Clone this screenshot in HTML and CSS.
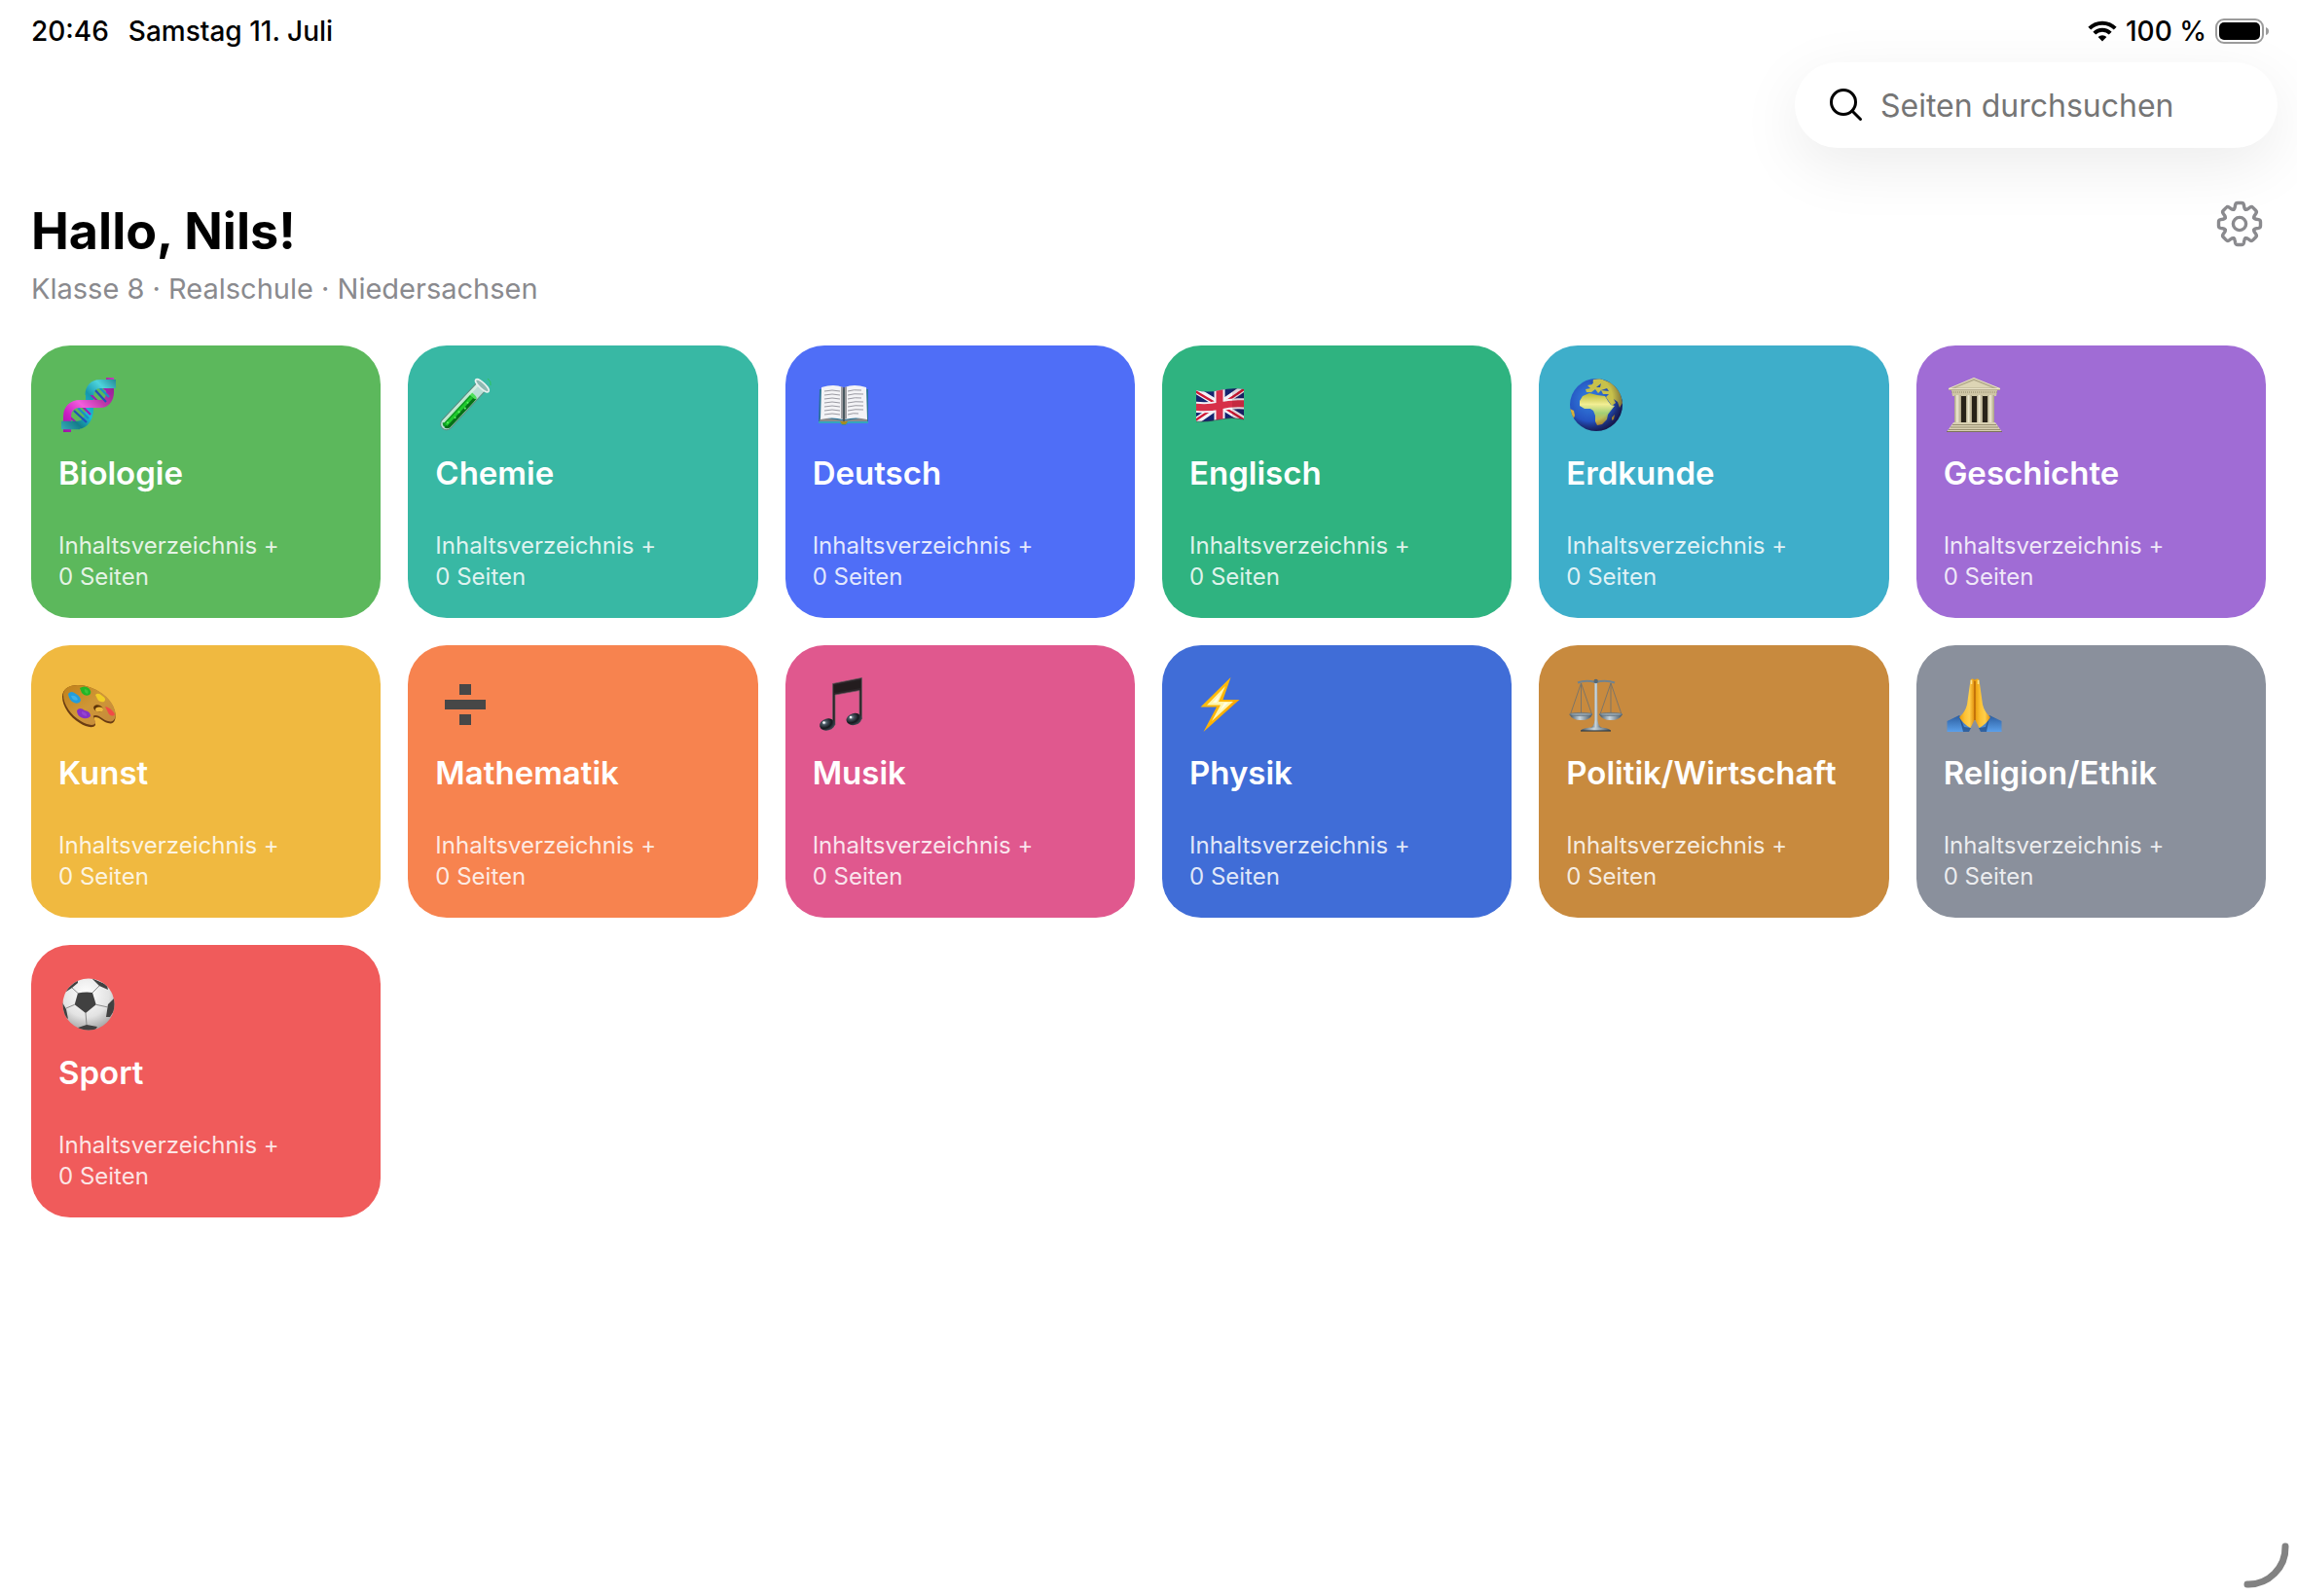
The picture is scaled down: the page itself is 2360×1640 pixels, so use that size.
FILE: index.html
```html
<!DOCTYPE html>
<html lang="de">
<head>
<meta charset="utf-8">
<meta name="viewport" content="width=device-width, initial-scale=1">
<title>Fächer</title>
<link rel="stylesheet" href="styles.css">
</head>
<body>
<div class="status">
  <div class="status-group status-left"><time>20:46</time><span>Samstag 11. Juli</span></div>
  <div class="status-group">
    <svg class="wifi" viewBox="0 0 30 22" aria-hidden="true"><g fill="none" stroke="#000" stroke-width="4"><path d="M1.8 8.2A18.5 18.5 0 0 1 28.2 8.2"/><path d="M6.8 13.2A11.5 11.5 0 0 1 23.2 13.2"/></g><path d="M15 21.5L10.6 17.1A6.3 6.3 0 0 1 19.4 17.1Z"/></svg>
    <span>100 %</span>
    <svg class="battery" viewBox="0 0 56 26" aria-hidden="true"><rect x="1" y="1" width="48" height="24" rx="8" fill="none" stroke="#9b9b9b" stroke-width="2"/><rect x="4" y="4" width="42" height="18" rx="5"/><path d="M52 9Q55 10 55 13T52 17Z" fill="#9b9b9b"/></svg>
  </div>
</div>

<form class="search" role="search">
  <svg class="search-icon" viewBox="0 0 34 34" aria-hidden="true"><circle cx="14" cy="14" r="12.5"/><path d="M23 23L31.5 31.5"/></svg>
  <input type="search" aria-label="Seiten durchsuchen" placeholder="Seiten durchsuchen">
</form>

<main>
  <header class="intro">
    <div>
      <h1>Hallo, Nils!</h1>
      <p>Klasse 8 · Realschule · Niedersachsen</p>
    </div>
    <button class="settings" type="button" aria-label="Einstellungen">
      <svg viewBox="-24 -24 48 48" aria-hidden="true">
        <defs><path id="tooth" d="M-6.1-14.8Q-5-15.5-4.8-17L-4.4-19.5Q-4-21.5-2-21.5H2Q4-21.5 4.4-19.5L4.8-17Q5-15.5 6.1-14.8"/></defs>
        <g fill="none" stroke="#8a8a8e" stroke-width="3.4" stroke-linecap="round">
          <use href="#tooth"/><use href="#tooth" transform="rotate(45)"/><use href="#tooth" transform="rotate(90)"/><use href="#tooth" transform="rotate(135)"/><use href="#tooth" transform="rotate(180)"/><use href="#tooth" transform="rotate(225)"/><use href="#tooth" transform="rotate(270)"/><use href="#tooth" transform="rotate(315)"/>
          <circle r="6.6"/>
        </g>
      </svg>
    </button>
  </header>

  <nav class="grid" aria-label="Fächer">
    <a class="card biologie" href="#biologie">
      <svg class="icon" viewBox="0 0 60 60" aria-hidden="true">
        <defs>
          <linearGradient id="teal" x1="0" y1="60" x2="60" y2="0" gradientUnits="userSpaceOnUse"><stop offset="0" stop-color="#46bcc6"/><stop offset=".25" stop-color="#147d8b"/><stop offset=".42" stop-color="#1cbdd6"/><stop offset=".6" stop-color="#1597ae"/><stop offset=".78" stop-color="#4ed3dc"/><stop offset="1" stop-color="#1b7887"/></linearGradient>
          <linearGradient id="pink" x1="0" y1="60" x2="60" y2="0" gradientUnits="userSpaceOnUse"><stop offset="0" stop-color="#8d1496"/><stop offset=".25" stop-color="#c91cc4"/><stop offset=".45" stop-color="#f35ddd"/><stop offset=".65" stop-color="#bd38a8"/><stop offset=".85" stop-color="#9a2396"/><stop offset="1" stop-color="#d94fc6"/></linearGradient>
        </defs>
        <path d="M53 2V17C53 24 49 29 43 29" fill="none" stroke="url(#pink)" stroke-width="8"/>
        <path d="M32 16V34C32 43 28 50 20 51" fill="none" stroke="url(#teal)" stroke-width="8"/>
        <g stroke="#2450b8" stroke-width="2.2"><path d="M16 36L29 48M36 13L49 27"/><path stroke="#1a8fc8" d="M20 33L31 44M42 12L52 22"/><path stroke="#a01cb4" d="M10 41L18 48M25 32L33 40M31 17L41 27M45 11L54 19"/></g>
        <path d="M44 29H22C14 29 9 34 9 42V58" fill="none" stroke="url(#pink)" stroke-width="8"/>
        <path d="M59 8.500H43C36 8.500 32 13 32 20" fill="none" stroke="url(#teal)" stroke-width="9"/>
        <path d="M22 51H3" fill="none" stroke="url(#teal)" stroke-width="8.500"/>
      </svg>
      <h2>Biologie</h2>
      <p>Inhaltsverzeichnis +<br>0 Seiten</p>
    </a>
    <a class="card chemie" href="#chemie">
      <svg class="icon" viewBox="0 0 60 60" aria-hidden="true">
        <g transform="rotate(43 30 30)">
          <path d="M24 3V57A6 6 0 0 0 36 57V3Z" fill="#b9dfd6" stroke="#5e8d82" stroke-width="1"/>
          <path d="M25.500 17H35V57A5 5 0 0 1 25.500 57Z" fill="#0c9a22"/>
          <path d="M31 17H35V57A5 5 0 0 1 31 61Z" fill="#066f18"/>
          <path d="M29 19H32V58H29Z" fill="#1fc92c"/>
          <ellipse cx="30" cy="17" rx="4.800" ry="1.800" fill="#4ee15a"/>
          <path d="M26.200 5V57" stroke="#d7f4e5" stroke-width="2.600" stroke-linecap="round" opacity=".85"/>
          <g fill="#58ef5e"><circle cx="31" cy="26" r="1"/><circle cx="33" cy="32" r="1.100"/><circle cx="31" cy="39" r="1.200"/><circle cx="32" cy="46" r="1"/><circle cx="30" cy="55" r="1"/></g>
          <ellipse cx="30" cy="3" rx="9" ry="3" fill="#8fb9b2" stroke="#e7f2f0" stroke-width="1.600"/>
        </g>
        <path d="M54 3Q58 6 57 10" fill="none" stroke="#2bc45a" stroke-width="1"/>
      </svg>
      <h2>Chemie</h2>
      <p>Inhaltsverzeichnis +<br>0 Seiten</p>
    </a>
    <a class="card deutsch" href="#deutsch">
      <svg class="icon" viewBox="0 0 60 60" aria-hidden="true">
        <path d="M7 14H57V49H36Q34 51 32 51T28 49H6Z" fill="#2a7398"/>
        <path d="M6 47H28Q32 51 36 47H57V49H36Q32 52 28 49H6Z" fill="#34a5be"/>
        <path d="M8 43L31 46L32 48L33 46L56 43V47H36Q32 50 28 47H7Z" fill="#8b8a8a"/>
        <path d="M9 12Q22 8 31 12V45Q20 42 8 45Z" fill="#f3f3f6"/><path d="M55 12Q42 8 33 12V45Q44 42 56 45Z" fill="#f3f3f6"/>
        <path d="M29 11L31 12V45L29 44ZM33 12L35 11V44L33 45Z" fill="#9c9ca0"/><path d="M32 12V47" stroke="#55504e" stroke-width="1.500"/>
        <g fill="none" stroke="#9a9aa2" stroke-width="1"><path d="M12 16Q20 14 28 16M12 20Q20 18 28 20M12 24Q20 22 28 24M12 28Q20 26 28 28M12 32Q20 30 28 32M12 36Q20 34 28 36M12 40Q20 38 28 40"/><path d="M36 16Q42 14 50 15M36 20Q42 18 52 19M36 24Q44 22 50 23M36 28Q44 26 52 27M36 32Q44 30 52 31M36 36Q44 34 52 35M36 40Q42 38 47 39"/></g>
        <path d="M28 47H36L34 50H30Z" fill="#a68a21"/>
      </svg>
      <h2>Deutsch</h2>
      <p>Inhaltsverzeichnis +<br>0 Seiten</p>
    </a>
    <a class="card englisch" href="#englisch">
      <svg class="icon" viewBox="0 0 60 60" aria-hidden="true">
        <defs><clipPath id="flag"><path d="M7 15Q18 18 31 15T56 14V45Q44 42 31 45T7 47Z"/></clipPath></defs>
        <g clip-path="url(#flag)">
          <path d="M0 0H60V60H0Z" fill="#14246f"/>
          <g fill="none" stroke="#f4f2f7" stroke-width="7"><path d="M5 14L57 46M5 48L57 12"/></g>
          <g fill="none" stroke="#cf1734" stroke-width="2.400"><path d="M6 16L28 29M36 33L57 46M6 46L27 32M37 27L56 14"/></g>
          <path d="M31 10V50M4 32Q18 34 31 31T58 29" fill="none" stroke="#f4f2f7" stroke-width="11"/>
          <path d="M31 10V50M4 32Q18 34 31 31T58 29" fill="none" stroke="#d72f49" stroke-width="7"/>
          <path d="M44 8H58V52H44Z" fill="#400" opacity=".12"/>
        </g>
        <path d="M7 47Q18 48 31 45T56 45" fill="none" stroke="#333" stroke-opacity=".5" stroke-width="1"/>
      </svg>
      <h2>Englisch</h2>
      <p>Inhaltsverzeichnis +<br>0 Seiten</p>
    </a>
    <a class="card erdkunde" href="#erdkunde">
      <svg class="icon" viewBox="0 0 60 60" aria-hidden="true">
        <defs>
          <radialGradient id="sea" cx=".38" cy=".4" r=".65"><stop offset="0" stop-color="#3584e0"/><stop offset=".65" stop-color="#2452c0"/><stop offset="1" stop-color="#1b2d74"/></radialGradient>
          <radialGradient id="night" cx=".38" cy=".38" r=".66"><stop offset=".65" stop-color="#102" stop-opacity="0"/><stop offset="1" stop-color="#102" stop-opacity=".5"/></radialGradient>
          <linearGradient id="land" x1="0" y1="0" x2="0" y2="1"><stop offset="0" stop-color="#b9b833"/><stop offset=".35" stop-color="#f2ee94"/><stop offset=".62" stop-color="#a3cf75"/><stop offset="1" stop-color="#dca732"/></linearGradient>
          <clipPath id="globe"><circle cx="31" cy="30" r="27"/></clipPath>
        </defs>
        <circle cx="31" cy="30" r="27" fill="url(#sea)"/>
        <g clip-path="url(#globe)">
          <path d="M17 21L24 18L32 20L40 21L43 26L46 30L50 31L46 36L43 40L42 45L37 50L32 51L30 47L30 41L28 36L25 34H19L14 31L14 26Z" fill="url(#land)"/>
          <path d="M21 17L20 14L25 13L22 10L27 9L28 4L35 3L48 8L56 18L58 28L55 33L53 27L49 24L51 28L47 31L41 22L44 19L38 19L36 15L33 18L30 14L26 17Z" fill="#c7c14b"/>
          <path d="M24 7L27 5L28 8ZM31 12L36 8L35 12ZM36 15L42 13L44 16Z" fill="#2852ae"/>
          <path d="M4 34L8 36L9 41L7 46L9 50L3 46Z" fill="#d7b13a"/><path d="M47 43L50 40L49 45L47 46Z" fill="#d7b13a"/>
        </g>
        <circle cx="31" cy="30" r="27" fill="url(#night)"/>
      </svg>
      <h2>Erdkunde</h2>
      <p>Inhaltsverzeichnis +<br>0 Seiten</p>
    </a>
    <a class="card geschichte" href="#geschichte">
      <svg class="icon" viewBox="0 0 60 60" aria-hidden="true">
        <defs><linearGradient id="column"><stop offset="0" stop-color="#aaa283"/><stop offset=".4" stop-color="#f0ead1"/><stop offset="1" stop-color="#aaa082"/></linearGradient></defs>
        <path d="M13 21H50V49H13Z" fill="#282218"/>
        <path d="M31 2L58 13V15H5V13Z" fill="#b5ac8e"/><path d="M31 5L50 12.500H12Z" fill="#ddd5b5"/><path d="M5 13.500H58M31 2.500L5 13.500M31 2.500L58 13.500" stroke="#ebe4c8" stroke-width="1" fill="none"/>
        <path d="M8 15H55L54 21H9Z" fill="#cfc6a5"/><path d="M8 17H55" stroke="#938a6d" stroke-width="1" stroke-dasharray="1 1"/>
        <g fill="url(#column)"><rect x="11" y="20" width="7" height="29"/><rect x="23" y="20" width="6" height="29"/><rect x="34" y="20" width="6" height="29"/><rect x="45" y="20" width="7" height="29"/></g>
        <path d="M10 48H53L60 58H3Z" fill="#d9d1b2"/><path d="M9 50.500H54M7 53H56M5 55.500H58" stroke="#978e70" stroke-width="1"/><path d="M3 57.500H60" stroke="#7a7158" stroke-width="1"/>
      </svg>
      <h2>Geschichte</h2>
      <p>Inhaltsverzeichnis +<br>0 Seiten</p>
    </a>
    <a class="card kunst" href="#kunst">
      <svg class="icon" viewBox="0 0 60 60" aria-hidden="true">
        <defs><linearGradient id="wood" x1="0" y1="0" x2="1" y2="1"><stop offset="0" stop-color="#c08019"/><stop offset=".5" stop-color="#cf9737"/><stop offset="1" stop-color="#c4883c"/></linearGradient></defs>
        <path d="M4 22C4 14 11 10 20 10C36 10 55 23 58 37C60 46 57 51 51 49C46 48 43 43 38 43C34 43 39 48 38 51C36 55 28 53 22 49C12 43 4 32 4 22Z" fill="#6b3d12"/>
        <path d="M5 20C5 13 12 10 20 10C36 10 55 22 58 36C60 44 57 49 51 47C46 46 43 41 38 41C33 41 39 46 38 49C36 53 28 50 23 47C13 41 5 30 5 20Z" fill="url(#wood)"/>
        <ellipse cx="41" cy="34" rx="5" ry="3.500" transform="rotate(20 41 34)" fill="#5c3308"/><ellipse cx="42" cy="35" rx="4" ry="2.600" fill="#efb940"/>
        <path d="M10 19Q13 15 18 19Q23 22 23 26Q21 30 16 28Q11 26 10 19Z" fill="#249ddb"/><path d="M13 21Q18 20 20 25Q15 27 13 21Z" fill="#3fb1e8"/>
        <path d="M22 13Q27 10 31 13Q35 17 32 20Q27 22 24 18Z" fill="#24b526"/><path d="M27 14Q32 15 30 19Q26 18 27 14Z" fill="#3ec53a"/>
        <path d="M38 20Q41 17 45 21Q50 24 47 27Q42 28 40 24Z" fill="#f2cd26"/><path d="M48 32Q54 33 58 40Q56 43 52 40Z" fill="#f14a46"/>
        <path d="M19 36Q22 32 27 36Q33 37 33 42Q29 46 23 43Q19 41 19 36Z" fill="#8632c5"/><path d="M24 37Q30 38 29 42Q23 41 24 37Z" fill="#9344d2"/>
      </svg>
      <h2>Kunst</h2>
      <p>Inhaltsverzeichnis +<br>0 Seiten</p>
    </a>
    <a class="card mathematik" href="#mathematik">
      <svg class="icon" viewBox="0 0 60 60" aria-hidden="true"><path d="M25 9H37V20H25ZM10 25H52V35H10ZM25 40H37V51H25Z" fill="#474747"/></svg>
      <h2>Mathematik</h2>
      <p>Inhaltsverzeichnis +<br>0 Seiten</p>
    </a>
    <a class="card musik" href="#musik">
      <svg class="icon" viewBox="0 0 60 60" aria-hidden="true">
        <defs><radialGradient id="head" cx=".35" cy=".3" r=".7"><stop offset="0" stop-color="#a9b9c4"/><stop offset=".25" stop-color="#46545f"/><stop offset=".65" stop-color="#15191e"/><stop offset="1" stop-color="#3c4650"/></radialGradient></defs>
        <path d="M20.500 8.500L50.500 2.500V45H48V15.500L23 20V51H20.500Z" fill="#2b2528" stroke="#6b5962" stroke-width=".7"/>
        <path d="M22 10L49 5V13L22 18Z" fill="#231c1e"/>
        <ellipse cx="15" cy="50.500" rx="8" ry="6" transform="rotate(-14 15 50.500)" fill="url(#head)"/><ellipse cx="42.500" cy="45" rx="8" ry="6" transform="rotate(-14 42.500 45)" fill="url(#head)"/>
        <circle cx="11.500" cy="48.500" r="1.200" fill="#fff"/><circle cx="39" cy="43" r="1.200" fill="#fff"/>
      </svg>
      <h2>Musik</h2>
      <p>Inhaltsverzeichnis +<br>0 Seiten</p>
    </a>
    <a class="card physik" href="#physik">
      <svg class="icon" viewBox="0 0 60 60" aria-hidden="true">
        <defs><linearGradient id="bolt" x1="0" y1="0" x2="1" y2="1"><stop offset="0" stop-color="#ffc61a"/><stop offset=".6" stop-color="#ffb100"/><stop offset="1" stop-color="#f27a05"/></linearGradient></defs>
        <path d="M42.500 2L11.500 32.500H28L14.500 58L51.500 25H34.500Z" fill="url(#bolt)"/>
        <path d="M37 11L18 30.500H32L23 47L45 27H30Z" fill="#fff6ae"/>
        <path d="M31 20L24 28H36L31 37L40 28H28Z" fill="#fffde6"/>
      </svg>
      <h2>Physik</h2>
      <p>Inhaltsverzeichnis +<br>0 Seiten</p>
    </a>
    <a class="card politik" href="#politik">
      <svg class="icon" viewBox="0 0 60 60" aria-hidden="true">
        <defs><linearGradient id="steel"><stop offset="0" stop-color="#3f4f5b"/><stop offset=".45" stop-color="#c9d6de"/><stop offset="1" stop-color="#41505c"/></linearGradient></defs>
        <g fill="none" stroke="#75736b" stroke-width=".9"><path d="M15.500 8L4.500 40M15.500 8L26.500 40M15.500 8V40M46 8L35 40M46 8L57 40M46 8V40"/></g>
        <path d="M12 7.500Q20 4.500 30.500 7Q41 4.500 50 7.500" fill="none" stroke="#71838f" stroke-width="2"/>
        <path d="M29.300 5H32L32.500 46Q33 52 37 54H25Q29 52 29.300 46Z" fill="url(#steel)"/><circle cx="30.700" cy="6" r="2.200" fill="#566874"/>
        <path d="M15 57Q17 53 30.700 53.500Q44 53 46 57Z" fill="url(#steel)"/><path d="M15 57H46" stroke="#313c45" stroke-width="1.200"/>
        <g fill="url(#steel)"><path d="M3.500 40H27Q25 46 15.500 46T3.500 40Z"/><path d="M34 40H58Q55 46 46 46T34 40Z"/></g>
        <g fill="#8e9ea9" stroke="#5b6a74" stroke-width=".6"><ellipse cx="15.300" cy="40" rx="11.700" ry="1.600"/><ellipse cx="46" cy="40" rx="11.700" ry="1.600"/></g>
      </svg>
      <h2>Politik/Wirtschaft</h2>
      <p>Inhaltsverzeichnis +<br>0 Seiten</p>
    </a>
    <a class="card religion" href="#religion">
      <svg class="icon" viewBox="0 0 60 60" aria-hidden="true">
        <defs>
          <linearGradient id="hand"><stop offset="0" stop-color="#e79a0b"/><stop offset=".35" stop-color="#fdc234"/><stop offset=".65" stop-color="#ffcf4b"/><stop offset="1" stop-color="#e08b07"/></linearGradient>
          <linearGradient id="sleeve" x1="0" y1="0" x2="0" y2="1"><stop offset="0" stop-color="#2b5d9f"/><stop offset="1" stop-color="#5ba0ea"/></linearGradient>
        </defs>
        <path d="M3.500 47L16 41L28 54L26 58H3.500Z" fill="url(#sleeve)"/><path d="M59.500 47L47 41L36 54L38 58H59.500Z" fill="url(#sleeve)"/>
        <path d="M16 42L21 53L28 54L26 58H20Z" fill="#173c72" opacity=".6"/><path d="M47 42L43 53L36 54L38 58H44Z" fill="#173c72" opacity=".6"/>
        <path d="M27.500 5Q28 3 30 3.500L32 4.500V45L27.500 54Q20 50 16 43Q22 38 24 30Z" fill="url(#hand)"/><path d="M36.500 5Q36 3 34 3.500L32 4.500V45L36.500 54Q44 50 48 43Q42 38 40 30Z" fill="url(#hand)"/>
        <path d="M32 6V46" stroke="#b05d08" stroke-width="1.200"/><path d="M28.500 5V9M35.500 5V9" stroke="#ffe28a" stroke-width="1.500"/>
      </svg>
      <h2>Religion/Ethik</h2>
      <p>Inhaltsverzeichnis +<br>0 Seiten</p>
    </a>
    <a class="card sport" href="#sport">
      <svg class="icon" viewBox="0 0 60 60" aria-hidden="true">
        <defs><radialGradient id="ball" cx=".45" cy=".3" r=".75"><stop offset="0" stop-color="#fff"/><stop offset=".6" stop-color="#e3e3e3"/><stop offset="1" stop-color="#9c9c9c"/></radialGradient><clipPath id="ballclip"><circle cx="31" cy="30" r="26.500"/></clipPath></defs>
        <circle cx="31" cy="30" r="26.500" fill="url(#ball)"/>
        <g clip-path="url(#ballclip)" fill="#414141">
          <path d="M20 18.500Q28 17 35 18L38.700 30.300L28 39L16.700 30.300Z"/>
          <path d="M7 16L20 4L20 8L14 13L8 17ZM34 3L50 10L51 15L42 11ZM57 24L51 30L49 43L53 43L60 32ZM4 28L8 35L10 45L3 40ZM20 54L29 51L40 53L36 59H24Z"/>
          <path d="M20 18.500L14 13M35 18L42 11M38.700 30.300L51 33M28 39L29 51M16.700 30.300L8 34" fill="none" stroke="#8a8a8a" stroke-width="1"/>
        </g>
      </svg>
      <h2>Sport</h2>
      <p>Inhaltsverzeichnis +<br>0 Seiten</p>
    </a>
  </nav>
</main>
<svg class="corner" viewBox="0 0 52 52" aria-hidden="true"><path d="M44 5A38 38 0 0 1 5 44"/></svg>
</body>
</html>
```

FILE: styles.css
```css
* { box-sizing: border-box; }

body {
  margin: 0;
  min-height: 100vh;
  background: #fff;
  color: #000;
  font-family: Inter, "Liberation Sans", sans-serif;
}

h1, h2, p { margin: 0; }

.status {
  position: relative;
  z-index: 1;
  display: flex;
  justify-content: space-between;
  align-items: center;
  height: 64px;
  padding: 0 28px 0 32px;
  font-size: 28px;
  font-weight: 500;
}

.status-group { display: flex; align-items: center; gap: 9px; }
.status-left { gap: 20px; }
.wifi { width: 30px; height: 22px; }
.battery { width: 56px; height: 26px; }

.search {
  display: flex;
  align-items: center;
  gap: 18px;
  width: 496px;
  max-width: calc(100% - 40px);
  height: 88px;
  margin: 0 20px 0 auto;
  padding: 0 36px;
  border-radius: 44px;
  background: #fff;
  box-shadow: 0 18px 64px rgba(0, 0, 0, .08);
}

.search-icon {
  flex: none;
  width: 34px;
  height: 34px;
  fill: none;
  stroke: #000;
  stroke-width: 3;
  stroke-linecap: round;
}

.search input {
  flex: 1;
  min-width: 0;
  padding: 0;
  border: 0;
  outline: 0;
  background: none;
  font: inherit;
  font-size: 32px;
}

.search input::placeholder { color: #757575; opacity: 1; }

main { padding: 52px 32px 32px; }

.intro {
  display: flex;
  justify-content: space-between;
  align-items: flex-start;
  margin-bottom: 39px;
}

.intro h1 { font-size: 52px; line-height: 68px; font-weight: 700; }
.intro p { margin-top: 6px; font-size: 29px; line-height: 38px; color: #8a8a8e; }

.settings {
  width: 48px;
  height: 52px;
  margin-right: 3px;
  padding: 0;
  border: 0;
  background: none;
}

.settings svg { display: block; width: 48px; height: 48px; }

.grid {
  display: grid;
  grid-template-columns: repeat(auto-fill, minmax(320px, 1fr));
  gap: 28px;
}

.card {
  display: flex;
  flex-direction: column;
  min-height: 280px;
  padding: 31px 28px 26px;
  border-radius: 40px;
  color: #fff;
  text-decoration: none;
}

.icon { width: 60px; height: 60px; }
.card h2 { margin-top: 18px; font-size: 33px; line-height: 44px; font-weight: 600; }
.card p { margin-top: auto; font-size: 24px; line-height: 32px; color: rgba(255, 255, 255, .85); }

.biologie { background: #5cb85c; }
.chemie { background: #38b8a4; }
.deutsch { background: #4f6ef7; }
.englisch { background: #2fb380; }
.erdkunde { background: #3eaeca; }
.geschichte { background: #a06cd5; }
.kunst { background: #f0b940; }
.mathematik { background: #f7834f; }
.musik { background: #e0588e; }
.physik { background: #406dd7; }
.politik { background: #c88a3e; }
.religion { background: #8a909c; }
.sport { background: #f05b5b; }

.corner {
  position: fixed;
  right: 4px;
  bottom: 4px;
  width: 52px;
  height: 52px;
  fill: none;
  stroke: #828282;
  stroke-width: 7;
  stroke-linecap: round;
}
```
